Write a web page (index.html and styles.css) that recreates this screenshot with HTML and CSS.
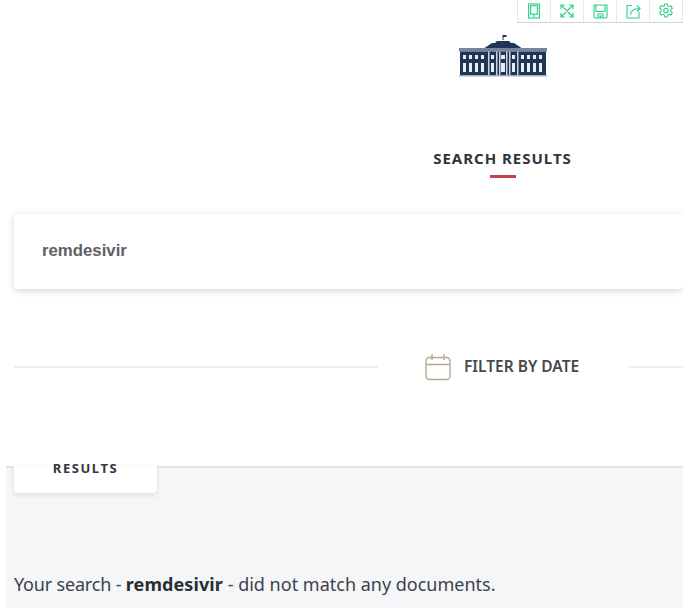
FILE: index.html
```html
<!DOCTYPE html>
<html lang="en">
<head>
<meta charset="utf-8">
<title>Search results</title>
<link rel="stylesheet" href="styles.css">
</head>
<body>
<div class="page">
  <div class="toolbar">
    <span class="tool"><svg width="14" height="16" viewBox="0 0 14 16" fill="none" stroke="#2fd08a" stroke-width="1.2"><rect x="1.6" y="1" width="10.8" height="14"/><rect x="3.6" y="2.8" width="6.8" height="8.4"/><path d="M6 13.2h2"/></svg></span>
    <span class="tool"><svg width="14" height="14" viewBox="0 0 14 14" fill="none" stroke="#2fd08a" stroke-width="1.2"><path d="M1 13 13 1M1 1l12 12M1 5V1h4M9 1h4v4M1 9v4h4M13 9v4H9"/></svg></span>
    <span class="tool"><svg width="15" height="15" viewBox="0 0 15 15" fill="none" stroke="#2fd08a" stroke-width="1.1"><path d="M1 1h13v12l-1 1H2l-1-1zM3 1v6.500h9V1M5 14v-4h5v4"/><rect x="6.500" y="11.500" width="2" height="2.500" fill="#2fd08a" stroke="none"/></svg></span>
    <span class="tool"><svg width="15" height="15" viewBox="0 0 15 15" fill="none" stroke="#2fd08a" stroke-width="1.1"><path d="M6 1.500H1v12.500h12V8M4.500 11c0-4 3-6.500 9-6.500M11 1.500l3 3-3 3"/></svg></span>
    <span class="tool"><svg width="16" height="16" viewBox="0 0 16 16" fill="none" stroke="#2fd08a" stroke-width="1.1"><path d="M6.700 1h2.600l.4 2 1.300.7 2-.7 1.300 2.300-1.500 1.400v1.600l1.500 1.400-1.300 2.300-2-.7-1.300.7-.4 2H6.700l-.4-2-1.300-.7-2 .7-1.300-2.300 1.500-1.400V6.300L1.700 4.900 3 2.600l2 .7 1.300-.7z"/><circle cx="8" cy="7.500" r="2.300"/></svg></span>
  </div>

  <header class="brand">
    <svg class="logo" width="88" height="42" viewBox="0 0 88 42">
      <path fill="#1f3558" d="M43.500 0h1v5h-1zM44.500 0h3v2h-3z"/>
      <path fill="#1f3558" d="M38 6h12l2 2h3l9 6H24l9-6h3z"/>
      <rect fill="#77869c" x="0" y="13" width="88" height="3.500"/>
      <rect fill="#1f3558" x="1" y="16.500" width="86" height="23.500"/>
      <rect fill="#a5b0bf" x="0" y="40" width="88" height="1.500"/>
      <g fill="#e9edf2">
        <path d="M4 20h3v4H4zM10 20h3v4h-3zM16 20h3v4h-3zM22 20h3v4h-3zM62 20h3v4h-3zM68 20h3v4h-3zM74 20h3v4h-3zM80 20h3v4h-3z"/>
        <path d="M4 28h3v9H4zM10 28h3v9h-3zM16 28h3v9h-3zM22 28h3v9h-3zM62 28h3v9h-3zM68 28h3v9h-3zM74 28h3v9h-3zM80 28h3v9h-3z"/>
        <path d="M32 20h3v4h-3zM32 28h3v9h-3zM53 20h3v4h-3zM53 28h3v9h-3z"/>
        <path d="M42 28h4v9h-4zM42 20h4v4h-4z"/>
      </g>
      <g fill="#c9d2de">
        <path d="M29 16.500h1.500V40H29zM37 16.500h1.500V40H37zM40 16.500h1.500V40H40zM47 16.500h1.500V40H47zM50 16.500h1.500V40H50zM58 16.500h1.500V40H58z"/>
      </g>
    </svg>
    <h1 class="title">SEARCH RESULTS</h1>
    <span class="rule"></span>
  </header>

  <div class="search-card">remdesivir</div>

  <div class="filter">
    <span class="line line-left"></span>
    <svg class="cal" width="26" height="28" viewBox="0 0 26 28" fill="none" stroke="#b8a88f" stroke-width="1.400"><rect x="1" y="4.500" width="24" height="22" rx="3.500"/><path d="M1 11.500h24M7 1v6M19 1v6"/></svg>
    <span class="filter-label">FILTER BY DATE</span>
    <span class="line line-right"></span>
  </div>

  <section class="results">
    <div class="tab">RESULTS</div>
    <p class="message"><span class="lead">Your search - </span><strong>remdesivir</strong> - did not match any documents.</p>
  </section>
</div>
</body>
</html>
```
FILE: styles.css
```css
html, body {
  margin: 0;
  height: 100%;
  background: #fff;
}
.page {
  position: relative;
  width: 683px;
  height: 608px;
  overflow: hidden;
  background: #fff;
  font-family: "Noto Sans", sans-serif;
}
.toolbar {
  position: absolute;
  top: 0;
  left: 517px;
  display: flex;
  height: 22px;
  border: 1px solid #e2e7e4;
  border-top: 0;
  border-bottom: 1px solid #cfd6d2;
  background: #fff;
}
.tool {
  width: 32px;
  display: flex;
  align-items: center;
  justify-content: center;
  border-right: 1px solid #e8ebe9;
}
.tool:last-child { border-right: 0; }
.brand {
  display: flex;
  flex-direction: column;
  align-items: center;
  padding: 35px 0 0 322px;
}
.logo { display: block; }
.title {
  margin: 71px 0 0;
  font-size: 15px;
  line-height: 20px;
  font-weight: 700;
  letter-spacing: 1px;
  color: #2f343a;
}
.rule {
  width: 26px;
  height: 3px;
  margin-top: 7px;
  background: #c4404b;
}
.search-card {
  margin: 36px 0 0 14px;
  height: 75px;
  padding-left: 28px;
  line-height: 73px;
  font-family: "Liberation Sans", Arial, sans-serif;
  font-size: 16.800px;
  font-weight: 700;
  color: #5e6165;
  background: #fff;
  border-radius: 4px;
  box-shadow: 0 2px 7px rgba(40, 50, 60, 0.2);
}
.filter {
  display: flex;
  align-items: center;
  height: 30px;
  margin: 63px 0 0 14px;
}
.line {
  height: 2px;
  background: #f0f0f2;
}
.line-left { width: 364px; margin-right: 47px; }
.cal { flex: none; }
.filter-label {
  margin-left: 13px;
  padding-bottom: 2px;
  font-size: 15.500px;
  font-weight: 600;
  line-height: 20px;
  color: #45494e;
  width: 164px;
  white-space: nowrap;
}
.line-right { flex: 1; }
.results {
  position: relative;
  margin: 84px 0 0 6px;
  height: 140px;
  background: #f5f6f8;
  border-top: 2px solid #e3e4e6;
}
.tab {
  position: absolute;
  top: -2px;
  left: 8px;
  width: 143px;
  height: 27px;
  text-align: center;
  font-size: 13px;
  font-weight: 700;
  letter-spacing: 1.550px;
  line-height: 4px;
  color: #33383d;
  background: #fff;
  border-radius: 0 0 4px 4px;
  box-shadow: 0 2px 5px rgba(40, 50, 60, 0.12);
  clip-path: inset(-20px -8px -8px -8px);
}
.message {
  position: absolute;
  top: 103px;
  left: 8px;
  margin: 0;
  font-size: 18px;
  line-height: 26px;
  color: #3c4248;
  white-space: nowrap;
}
.lead { letter-spacing: -0.180px; }
.message strong {
  font-weight: 700;
  letter-spacing: 0.100px;
  color: #2a2e33;
}
```
